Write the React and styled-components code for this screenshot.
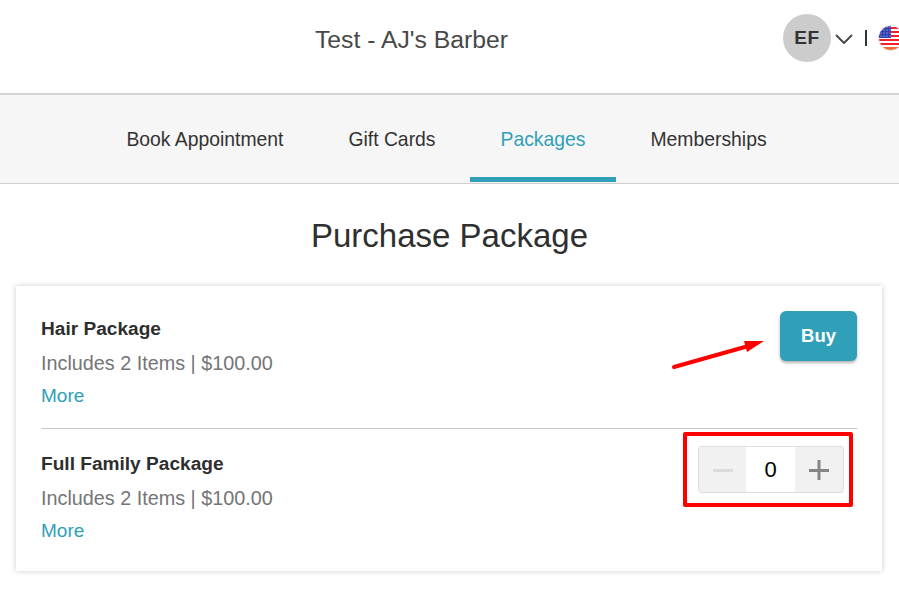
import React from 'react';
import styled, { createGlobalStyle } from 'styled-components';

const teal = '#30a0b8';

const GlobalStyle = createGlobalStyle`
  html, body {
    margin: 0;
    padding: 0;
    height: 100%;
    background: #fff;
    overflow: hidden;
  }
  body {
    font-family: "Liberation Sans", Arial, sans-serif;
    color: #333;
  }
`;

const tabs = ['Book Appointment', 'Gift Cards', 'Packages', 'Memberships'];

const packages = [
  { name: 'Hair Package', info: 'Includes 2 Items | $100.00', action: 'buy' },
  { name: 'Full Family Package', info: 'Includes 2 Items | $100.00', action: 'stepper' },
];

const UsFlag = () => (
  <FlagIcon viewBox="0 0 26 26">
    <defs>
      <clipPath id="flag-circle">
        <circle cx="13" cy="13" r="12" />
      </clipPath>
    </defs>
    <circle cx="13" cy="13" r="13" fill="#e4e4e4" />
    <g clipPath="url(#flag-circle)">
      <rect width="26" height="26" fill="#fff" />
      {[2, 6, 10, 14, 18].map((y) => (
        <rect key={y} x="0" y={y} width="26" height="2" fill="#f5202c" />
      ))}
      <rect x="0" y="0" width="13" height="13" fill="#2f3fb0" />
      {[2, 5, 8, 11].map((y) =>
        [3, 6, 9, 12].map((x) => (
          <circle key={`${x}-${y}`} cx={x} cy={y} r="0.6" fill="#dfe6ff" />
        ))
      )}
      <rect x="0" y="22" width="26" height="4" fill="#f26a30" />
    </g>
  </FlagIcon>
);

const PackageRow = ({ name, info, action }) => (
  <Row>
    <div>
      <PackageName>{name}</PackageName>
      <PackageInfo>{info}</PackageInfo>
      <MoreLink>More</MoreLink>
    </div>
    {action === 'buy' ? (
      <BuyButton>Buy</BuyButton>
    ) : (
      <Stepper>
        <StepButton>
          <svg width="20" height="20" viewBox="0 0 20 20">
            <rect x="0" y="9" width="20" height="3" fill="#dcdcdc" />
          </svg>
        </StepButton>
        <StepValue>0</StepValue>
        <StepButton $wide>
          <svg width="20" height="20" viewBox="0 0 20 20">
            <path d="M0 10.5h20M10 0v20" stroke="#858585" strokeWidth="3" fill="none" />
          </svg>
        </StepButton>
        <Highlight />
      </Stepper>
    )}
  </Row>
);

const App = () => (
  <>
    <GlobalStyle />
    <Header>
      <ShopName>Test - AJ's Barber</ShopName>
      <UserArea>
        <Avatar>EF</Avatar>
        <Chevron viewBox="0 0 18 10">
          <path d="M1 1l8 8 8-8" stroke="#4a4a4a" strokeWidth="2" fill="none" />
        </Chevron>
        <Separator />
        <UsFlag />
      </UserArea>
    </Header>
    <Nav>
      {tabs.map((tab) => (
        <Tab key={tab} $active={tab === 'Packages'}>{tab}</Tab>
      ))}
    </Nav>
    <Title>Purchase Package</Title>
    <Card>
      {packages.map((p) => (
        <PackageRow key={p.name} {...p} />
      ))}
      <Arrow viewBox="0 0 100 36">
        <path d="M6 31L84 9" stroke="#f00" strokeWidth="4" strokeLinecap="round" fill="none" />
        <path d="M76 5L96 5L79 16Z" fill="#f00" />
      </Arrow>
    </Card>
  </>
);

const Header = styled.header`
  height: 93px;
  display: flex;
  align-items: center;
  padding-bottom: 17px;
  box-sizing: border-box;
`;

const ShopName = styled.div`
  flex: 1;
  padding: 3px 0 0 40px;
  text-align: center;
  font-size: 24.75px;
  color: #484848;
`;

const UserArea = styled.div`
  flex: 0 0 116px;
  min-width: 0;
  display: flex;
  align-items: center;
`;

const Avatar = styled.div`
  width: 48px;
  height: 48px;
  border-radius: 50%;
  background: #cccccc;
  color: #333;
  font-size: 19px;
  font-weight: 700;
  letter-spacing: 0.5px;
  display: flex;
  align-items: center;
  justify-content: center;
  flex-shrink: 0;
`;

const Chevron = styled.svg`
  width: 18px;
  height: 10px;
  margin: 2px 0 0 4px;
  flex-shrink: 0;
`;

const Separator = styled.span`
  width: 2px;
  height: 16px;
  margin: 0 11px 0 12px;
  background: #333;
  flex-shrink: 0;
`;

const FlagIcon = styled.svg`
  width: 26px;
  height: 26px;
  flex-shrink: 0;
`;

const Nav = styled.nav`
  height: 91px;
  box-sizing: border-box;
  display: flex;
  justify-content: center;
  gap: 4px;
  padding-right: 6px;
  background: #f6f6f6;
  border-top: 2px solid #d4d4d4;
  border-bottom: 1px solid #cfcfcf;
`;

const Tab = styled.a`
  display: flex;
  align-items: center;
  padding: 7px 30.5px 0;
  font-size: 19.35px;
  color: ${(p) => (p.$active ? teal : '#333')};
  border-bottom: 5px solid ${(p) => (p.$active ? teal : 'transparent')};
  margin-bottom: 1px;
`;

const Title = styled.h1`
  margin: 0;
  padding-top: 32px;
  height: 102px;
  box-sizing: border-box;
  text-align: center;
  font-size: 33px;
  line-height: 40px;
  font-weight: 400;
  color: #2f2f2f;
`;

const Card = styled.section`
  position: relative;
  margin: 0 17px 0 16px;
  padding: 7px 25px;
  height: 285px;
  box-sizing: border-box;
  background: #fff;
  box-shadow: 0 0 6px rgba(0, 0, 0, 0.2);
`;

const Row = styled.div`
  height: 135px;
  box-sizing: border-box;
  padding-top: 18px;
  display: flex;
  justify-content: space-between;
  align-items: flex-start;
  & + & {
    padding-top: 17px;
    border-top: 1px solid #c8c8c8;
  }
`;

const PackageName = styled.div`
  font-size: 19.1px;
  line-height: 36px;
  font-weight: 700;
  color: #2e2e2e;
`;

const PackageInfo = styled.div`
  font-size: 19.8px;
  line-height: 32px;
  color: #757575;
`;

const MoreLink = styled.a`
  display: block;
  font-size: 19px;
  line-height: 34px;
  color: ${teal};
`;

const BuyButton = styled.button`
  width: 77px;
  height: 50px;
  border: none;
  border-radius: 6px;
  background: ${teal};
  color: #fff;
  font-family: inherit;
  font-size: 18.5px;
  font-weight: 700;
  box-shadow: 0 2px 3px rgba(0, 0, 0, 0.3);
`;

const Stepper = styled.div`
  position: relative;
  display: flex;
  width: 146px;
  height: 47px;
  margin-right: 13px;
  box-sizing: border-box;
  border: 1px solid #dedede;
  border-radius: 3px;
`;

const StepButton = styled.div`
  width: ${(p) => (p.$wide ? '48px' : '47px')};
  display: flex;
  align-items: center;
  justify-content: center;
  background: #f1f1f1;
`;

const StepValue = styled.div`
  flex: 1;
  display: flex;
  align-items: center;
  justify-content: center;
  font-size: 22px;
  color: #000;
  background: #fff;
`;

const Highlight = styled.div`
  position: absolute;
  top: -15px;
  left: -16px;
  right: -10px;
  bottom: -15px;
  border: 4px solid #f00;
  border-radius: 2px;
`;

const Arrow = styled.svg`
  position: absolute;
  left: 652px;
  top: 50px;
  width: 100px;
  height: 36px;
`;

export default App;
